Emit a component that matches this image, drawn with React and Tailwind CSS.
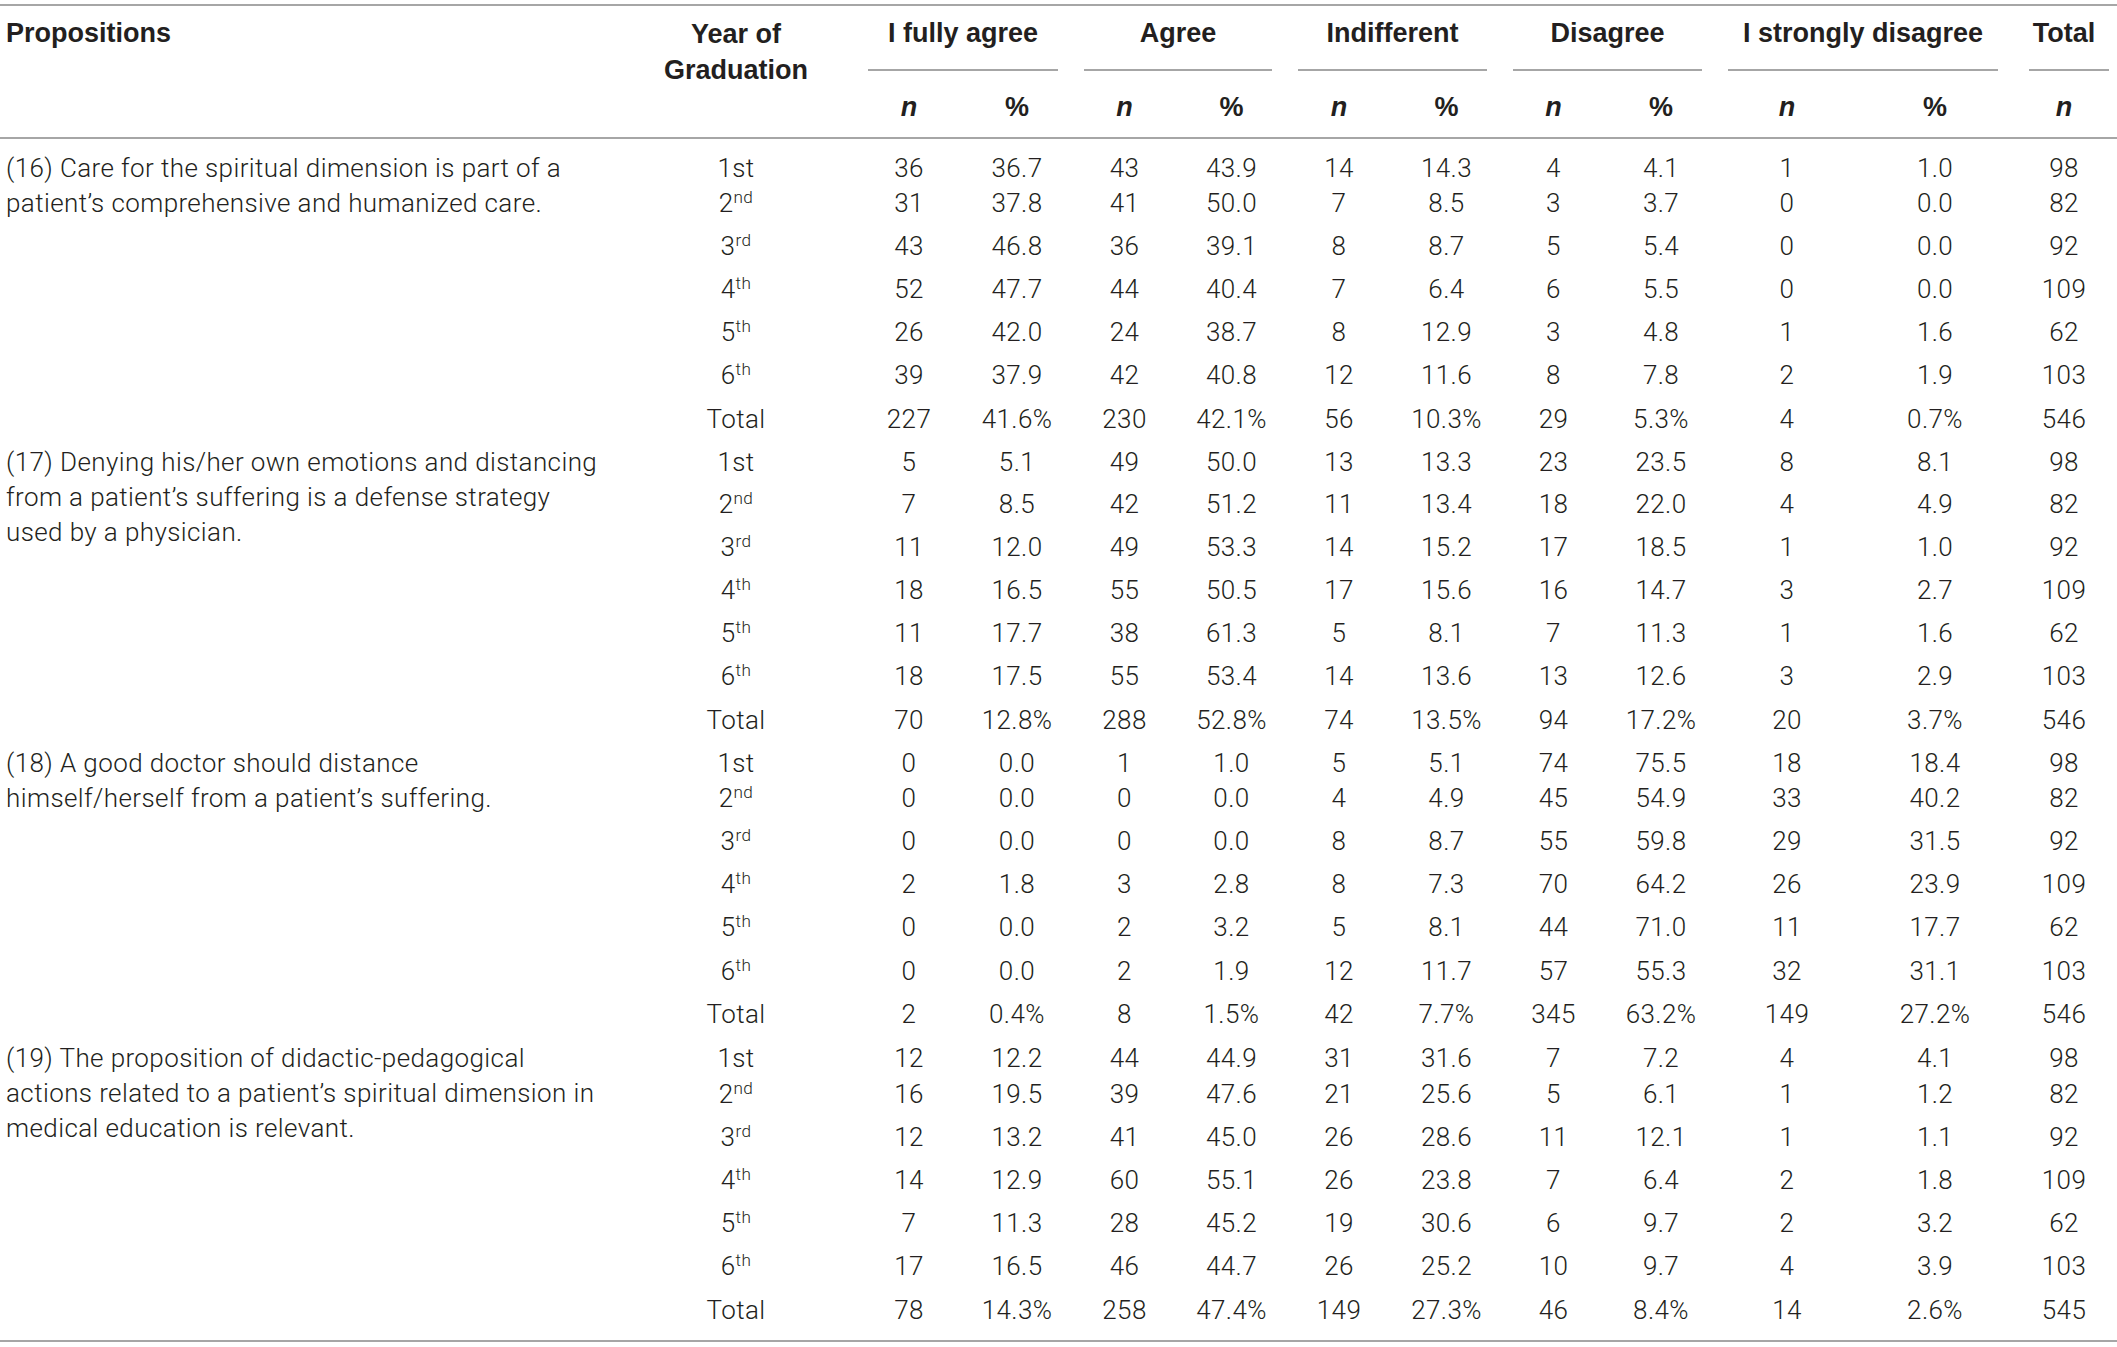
import React from "react";

const groups = [
    {
        lines: [
            "(16) Care for the spiritual dimension is part of a",
            "patient’s comprehensive and humanized care.",
        ],
        heights: ["h-[34px]", "h-[43px]", "h-[43px]", "h-[43px]", "h-[43px]", "h-[44px]", "h-[43px]"],
        rows: [
            ["1st", "36", "36.7", "43", "43.9", "14", "14.3", "4", "4.1", "1", "1.0", "98"],
            ["2nd", "31", "37.8", "41", "50.0", "7", "8.5", "3", "3.7", "0", "0.0", "82"],
            ["3rd", "43", "46.8", "36", "39.1", "8", "8.7", "5", "5.4", "0", "0.0", "92"],
            ["4th", "52", "47.7", "44", "40.4", "7", "6.4", "6", "5.5", "0", "0.0", "109"],
            ["5th", "26", "42.0", "24", "38.7", "8", "12.9", "3", "4.8", "1", "1.6", "62"],
            ["6th", "39", "37.9", "42", "40.8", "12", "11.6", "8", "7.8", "2", "1.9", "103"],
            ["Total", "227", "41.6%", "230", "42.1%", "56", "10.3%", "29", "5.3%", "4", "0.7%", "546"],
        ],
    },
    {
        lines: [
            "(17) Denying his/her own emotions and distancing",
            "from a patient’s suffering is a defense strategy",
            "used by a physician.",
        ],
        heights: ["h-[42px]", "h-[43px]", "h-[43px]", "h-[43px]", "h-[43px]", "h-[44px]", "h-[43px]"],
        rows: [
            ["1st", "5", "5.1", "49", "50.0", "13", "13.3", "23", "23.5", "8", "8.1", "98"],
            ["2nd", "7", "8.5", "42", "51.2", "11", "13.4", "18", "22.0", "4", "4.9", "82"],
            ["3rd", "11", "12.0", "49", "53.3", "14", "15.2", "17", "18.5", "1", "1.0", "92"],
            ["4th", "18", "16.5", "55", "50.5", "17", "15.6", "16", "14.7", "3", "2.7", "109"],
            ["5th", "11", "17.7", "38", "61.3", "5", "8.1", "7", "11.3", "1", "1.6", "62"],
            ["6th", "18", "17.5", "55", "53.4", "14", "13.6", "13", "12.6", "3", "2.9", "103"],
            ["Total", "70", "12.8%", "288", "52.8%", "74", "13.5%", "94", "17.2%", "20", "3.7%", "546"],
        ],
    },
    {
        lines: [
            "(18) A good doctor should distance",
            "himself/herself from a patient’s suffering.",
        ],
        heights: ["h-[35px]", "h-[43px]", "h-[43px]", "h-[43px]", "h-[44px]", "h-[43px]", "h-[44px]"],
        rows: [
            ["1st", "0", "0.0", "1", "1.0", "5", "5.1", "74", "75.5", "18", "18.4", "98"],
            ["2nd", "0", "0.0", "0", "0.0", "4", "4.9", "45", "54.9", "33", "40.2", "82"],
            ["3rd", "0", "0.0", "0", "0.0", "8", "8.7", "55", "59.8", "29", "31.5", "92"],
            ["4th", "2", "1.8", "3", "2.8", "8", "7.3", "70", "64.2", "26", "23.9", "109"],
            ["5th", "0", "0.0", "2", "3.2", "5", "8.1", "44", "71.0", "11", "17.7", "62"],
            ["6th", "0", "0.0", "2", "1.9", "12", "11.7", "57", "55.3", "32", "31.1", "103"],
            ["Total", "2", "0.4%", "8", "1.5%", "42", "7.7%", "345", "63.2%", "149", "27.2%", "546"],
        ],
    },
    {
        lines: [
            "(19) The proposition of didactic-pedagogical",
            "actions related to a patient’s spiritual dimension in",
            "medical education is relevant.",
        ],
        heights: ["h-[36px]", "h-[43px]", "h-[43px]", "h-[43px]", "h-[43px]", "h-[44px]", "h-[48px]"],
        rows: [
            ["1st", "12", "12.2", "44", "44.9", "31", "31.6", "7", "7.2", "4", "4.1", "98"],
            ["2nd", "16", "19.5", "39", "47.6", "21", "25.6", "5", "6.1", "1", "1.2", "82"],
            ["3rd", "12", "13.2", "41", "45.0", "26", "28.6", "11", "12.1", "1", "1.1", "92"],
            ["4th", "14", "12.9", "60", "55.1", "26", "23.8", "7", "6.4", "2", "1.8", "109"],
            ["5th", "7", "11.3", "28", "45.2", "19", "30.6", "6", "9.7", "2", "3.2", "62"],
            ["6th", "17", "16.5", "46", "44.7", "26", "25.2", "10", "9.7", "4", "3.9", "103"],
            ["Total", "78", "14.3%", "258", "47.4%", "149", "27.3%", "46", "8.4%", "14", "2.6%", "545"],
        ],
    },
];

const answerHeads = ["I fully agree", "Agree", "Indifferent", "Disagree", "I strongly disagree"];

// "2nd" -> 2 + raised "nd"; "1st" and "Total" stay plain like the source table
const YearLabel = ({ year }) => {
    if (year === "1st" || year === "Total") return year;
    return (
        <>
            {year.slice(0, 1)}
            <span className="relative -top-[0.5em] text-[0.66em] leading-none">{year.slice(1)}</span>
        </>
    );
};

const App = () => {
    return (
        <div className="w-[2117px] min-h-[1347px] bg-white pt-[4px] font-['Roboto','Liberation_Sans',sans-serif] text-[#231f20]">
            <table className="w-[2117px] table-fixed border-collapse">
                <colgroup>
                    <col className="w-[617px]" />
                    <col className="w-[238px]" />
                    <col className="w-[108px]" />
                    <col className="w-[108px]" />
                    <col className="w-[107px]" />
                    <col className="w-[107px]" />
                    <col className="w-[108px]" />
                    <col className="w-[107px]" />
                    <col className="w-[107px]" />
                    <col className="w-[108px]" />
                    <col className="w-[144px]" />
                    <col className="w-[152px]" />
                    <col className="w-[106px]" />
                </colgroup>

                {/* header: bold Helvetica-like face */}
                <thead className="font-['Liberation_Sans','Arimo',sans-serif] text-[27px] font-bold leading-[35px]">
                    <tr className="border-t-2 border-[#a6a6a6]">
                        <th rowSpan={2} className="pl-[6px] pt-[10px] text-left align-top">
                            Propositions
                        </th>
                        <th rowSpan={2} className="pt-[10px] text-center align-top leading-[36px]">
                            Year of
                            <br />
                            Graduation
                        </th>
                        {answerHeads.map((head) => (
                            <th key={head} colSpan={2} className="pt-[10px] align-top">
                                <div className="text-center">{head}</div>
                                <div className="mx-[13px] mt-[18px] border-b-2 border-[#a6a6a6]" />
                            </th>
                        ))}
                        <th className="pt-[10px] align-top">
                            <div className="text-center">Total</div>
                            <div className="ml-[18px] mr-[8px] mt-[18px] border-b-2 border-[#a6a6a6]" />
                        </th>
                    </tr>
                    <tr className="border-b-2 border-[#a6a6a6]">
                        {answerHeads.map((head) => (
                            <React.Fragment key={head}>
                                <th className="pt-[19px] pb-[12px] text-center italic">n</th>
                                <th className="pt-[19px] pb-[12px] text-center">%</th>
                            </React.Fragment>
                        ))}
                        <th className="pt-[19px] pb-[12px] text-center italic">n</th>
                    </tr>
                </thead>

                <tbody className="text-[26px] font-light leading-[35px] tracking-[0.4px]">
                    <tr className="h-[13px]">
                        <td colSpan={13} />
                    </tr>
                    {groups.map((group, gi) => (
                        <React.Fragment key={gi}>
                            {group.rows.map((row, ri) => (
                                <tr
                                    key={ri}
                                    className={`${group.heights[ri]} ${
                                        gi === groups.length - 1 && ri === group.rows.length - 1
                                            ? "border-b-2 border-[#a6a6a6]"
                                            : ""
                                    }`}
                                >
                                    {ri === 0 && (
                                        <td rowSpan={group.rows.length} className="pl-[6px] align-top text-left">
                                            {group.lines.map((line) => (
                                                <div key={line} className="whitespace-nowrap">
                                                    {line}
                                                </div>
                                            ))}
                                        </td>
                                    )}
                                    <td className="p-0 text-center align-top">
                                        <YearLabel year={row[0]} />
                                    </td>
                                    {row.slice(1).map((cell, ci) => (
                                        <td key={ci} className="p-0 text-center align-top">
                                            {cell}
                                        </td>
                                    ))}
                                </tr>
                            ))}
                        </React.Fragment>
                    ))}
                </tbody>
            </table>
        </div>
    );
};

export default App;
